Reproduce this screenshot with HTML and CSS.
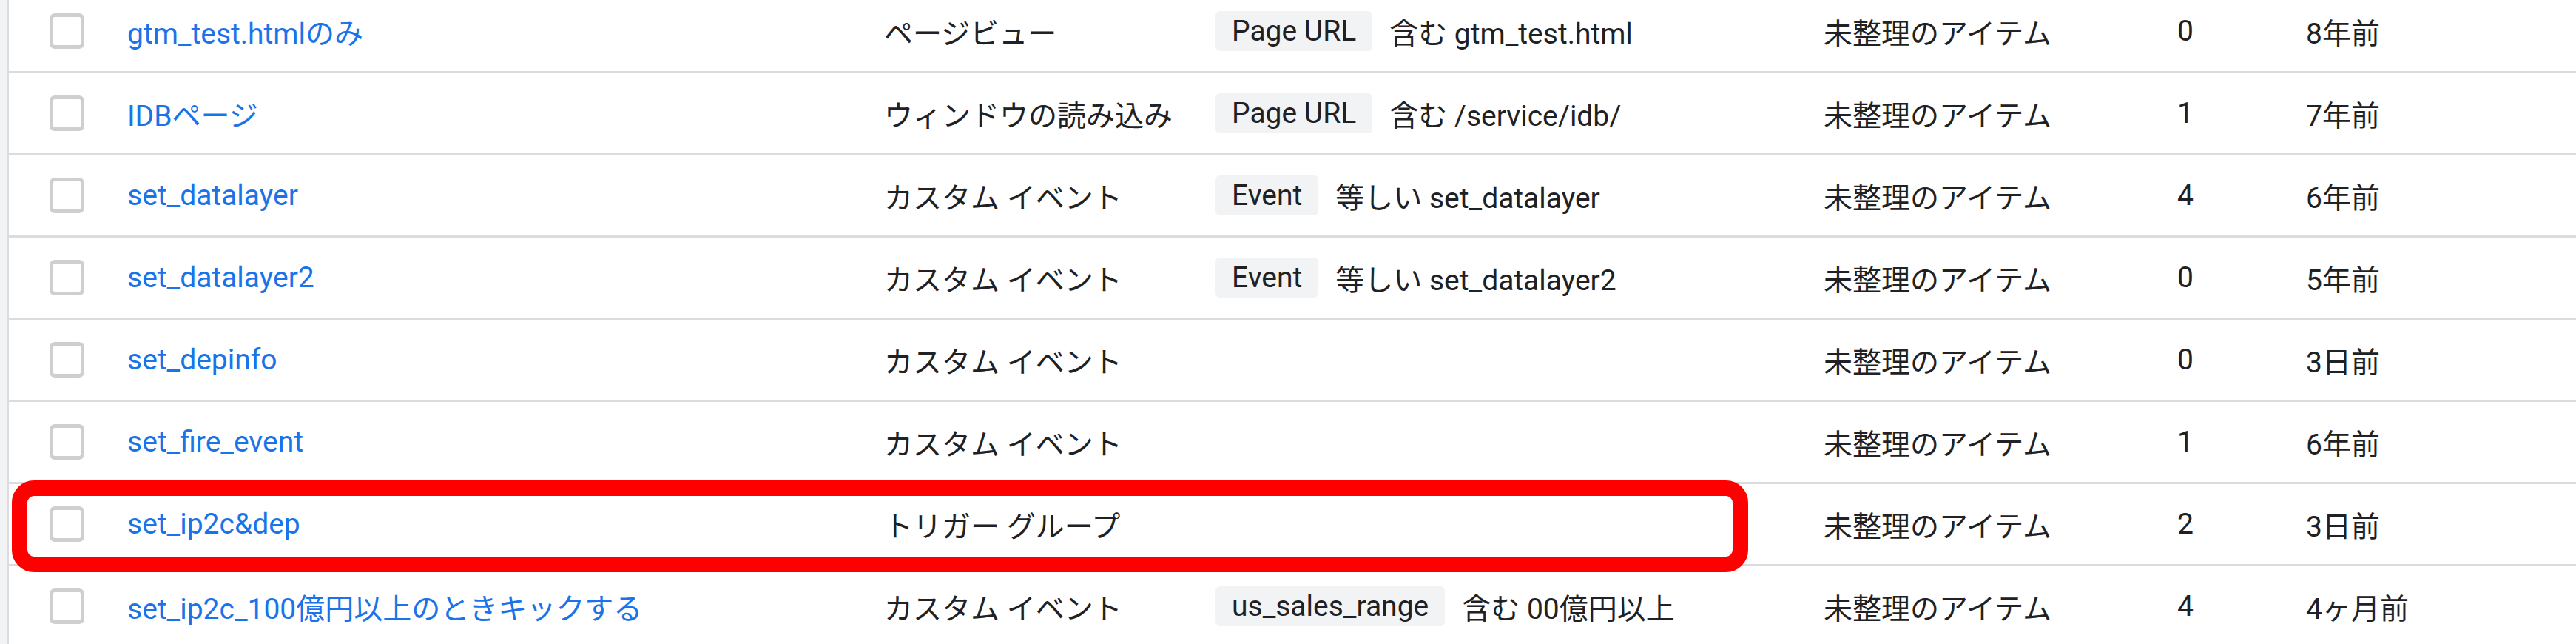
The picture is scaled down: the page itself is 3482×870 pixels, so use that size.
FILE: index.html
```html
<!DOCTYPE html>
<html lang="ja">
<head>
<meta charset="utf-8">
<title>トリガー</title>
<link rel="stylesheet" href="styles.css">
</head>
<body>
<div class="card">
  <div class="row">
    <span class="cb"></span>
    <a class="name">gtm_test.htmlのみ</a>
    <span class="type">ページビュー</span>
    <span class="cond"><span class="chip">Page URL</span><span class="op">含む gtm_test.html</span></span>
    <span class="folder">未整理のアイテム</span>
    <span class="count">0</span>
    <span class="date">8年前</span>
  </div>
  <div class="row">
    <span class="cb"></span>
    <a class="name">IDBページ</a>
    <span class="type">ウィンドウの読み込み</span>
    <span class="cond"><span class="chip">Page URL</span><span class="op">含む /service/idb/</span></span>
    <span class="folder">未整理のアイテム</span>
    <span class="count">1</span>
    <span class="date">7年前</span>
  </div>
  <div class="row">
    <span class="cb"></span>
    <a class="name">set_datalayer</a>
    <span class="type">カスタム イベント</span>
    <span class="cond"><span class="chip">Event</span><span class="op">等しい set_datalayer</span></span>
    <span class="folder">未整理のアイテム</span>
    <span class="count">4</span>
    <span class="date">6年前</span>
  </div>
  <div class="row">
    <span class="cb"></span>
    <a class="name">set_datalayer2</a>
    <span class="type">カスタム イベント</span>
    <span class="cond"><span class="chip">Event</span><span class="op">等しい set_datalayer2</span></span>
    <span class="folder">未整理のアイテム</span>
    <span class="count">0</span>
    <span class="date">5年前</span>
  </div>
  <div class="row">
    <span class="cb"></span>
    <a class="name">set_depinfo</a>
    <span class="type">カスタム イベント</span>
    <span class="cond"></span>
    <span class="folder">未整理のアイテム</span>
    <span class="count">0</span>
    <span class="date">3日前</span>
  </div>
  <div class="row">
    <span class="cb"></span>
    <a class="name">set_fire_event</a>
    <span class="type">カスタム イベント</span>
    <span class="cond"></span>
    <span class="folder">未整理のアイテム</span>
    <span class="count">1</span>
    <span class="date">6年前</span>
  </div>
  <div class="row highlighted">
    <span class="cb"></span>
    <a class="name">set_ip2c&amp;dep</a>
    <span class="type">トリガー グループ</span>
    <span class="cond"></span>
    <span class="folder">未整理のアイテム</span>
    <span class="count">2</span>
    <span class="date">3日前</span>
  </div>
  <div class="row">
    <span class="cb"></span>
    <a class="name">set_ip2c_100億円以上のときキックする</a>
    <span class="type">カスタム イベント</span>
    <span class="cond"><span class="chip">us_sales_range</span><span class="op">含む 00億円以上</span></span>
    <span class="folder">未整理のアイテム</span>
    <span class="count">4</span>
    <span class="date">4ヶ月前</span>
  </div>
</div>
</body>
</html>
```

FILE: styles.css
```css
html, body {
  margin: 0;
  padding: 0;
  background: #f1f3f4;
  overflow: hidden;
}

body {
  font-family: "Roboto", "Noto Sans CJK JP", sans-serif;
  font-size: 39px;
  color: #202124;
}

.card {
  margin-left: 10px;
  margin-top: -12.5px;
  border-left: 2px solid #dadce0;
  background: #ffffff;
}

.row {
  position: relative;
  box-sizing: border-box;
  height: 111px;
  border-bottom: 3px solid #dadce0;
  display: grid;
  grid-template-columns: 105px 1023px 448px 822px 478px 174px 1fr;
  align-items: center;
  padding-left: 55px;
  white-space: nowrap;
}

.cb {
  box-sizing: border-box;
  width: 47px;
  height: 48px;
  border: 5px solid #cfcfcf;
  border-radius: 7px;
  background: #fff;
}

.name {
  color: #1a73e8;
  text-decoration: none;
}

.cond {
  display: flex;
  align-items: center;
}

.chip {
  display: inline-flex;
  align-items: center;
  height: 54px;
  padding: 0 22px;
  border-radius: 6px;
  background: #f1f3f4;
}

.op {
  margin-left: 23px;
}

.highlighted::after {
  content: "";
  position: absolute;
  left: 4px;
  top: -5px;
  width: 2347px;
  height: 124px;
  box-sizing: border-box;
  border: 21px solid #ff0000;
  border-radius: 30px;
  pointer-events: none;
}
```
